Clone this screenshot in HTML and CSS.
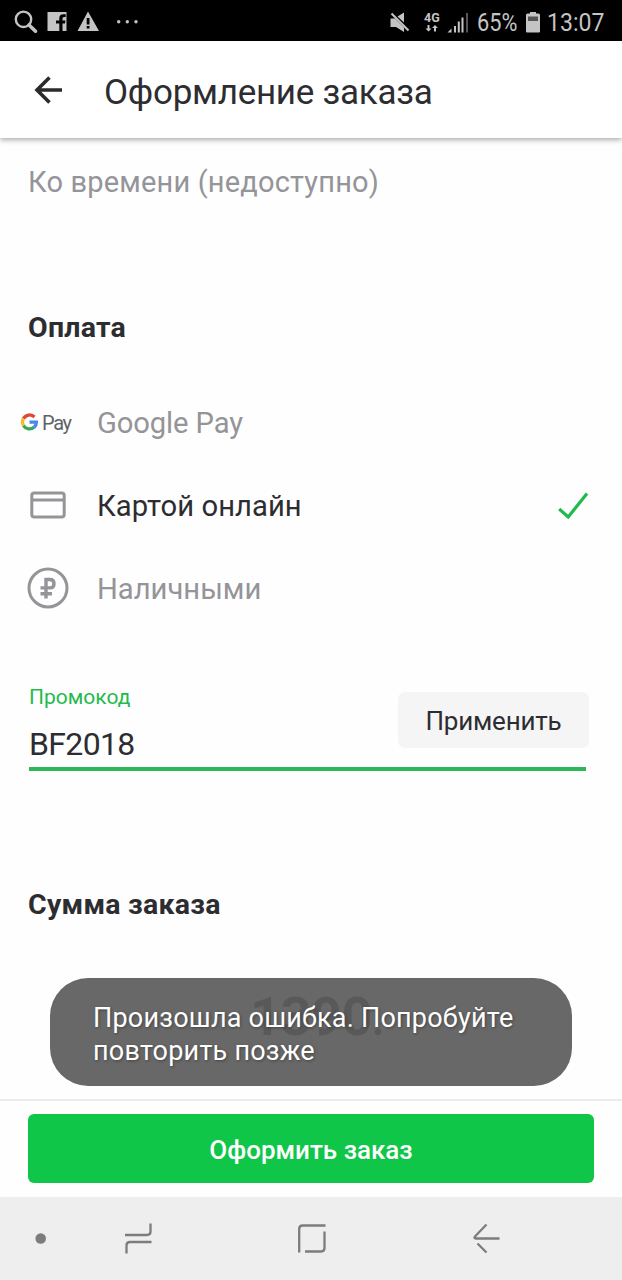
FILE: index.html
```html
<!DOCTYPE html>
<html lang="ru">
<head>
<meta charset="utf-8">
<title>Оформление заказа</title>
<link rel="stylesheet" href="styles.css">
</head>
<body>
<div class="phone">
  <div class="status">
    <svg class="status-left" width="150" height="41" viewBox="0 0 150 41" fill="#c4c4c4">
      <circle cx="23.500" cy="19.300" r="7.700" fill="none" stroke="#c4c4c4" stroke-width="2.400"/>
      <path d="M29 25l6.500 6.200" stroke="#c4c4c4" stroke-width="3.600" stroke-linecap="round"/>
      <path d="M47.500 12h19v19h-4v-7.500h2.500l.4-3H62.500v-2q0-1.500 1.500-1.500h1.700v-2.700h-2.400q-4 0-4 4v2.200H56v3h3.300V31H47.500z"/>
      <path fill-rule="evenodd" d="M88 11.500L99 31H77.500zM86.700 18v6.500h2.800V18zM86.700 26v2.600h2.800V26z"/>
      <circle cx="118.700" cy="21.700" r="1.700"/><circle cx="127.300" cy="21.700" r="1.700"/><circle cx="136" cy="21.700" r="1.700"/>
    </svg>
    <div class="status-right">
      <svg class="mute" width="20" height="21" viewBox="0 0 20 21" fill="#c4c4c4">
        <path d="M.5 6.500H5L14 15.500V20L6 15H.5zM7.500 4.500L14 .5V10.500z"/>
        <path d="M1.500 1.500L18.500 18.500" stroke="#c4c4c4" stroke-width="2.200"/>
      </svg>
      <div class="net"><span>4G</span>
        <svg width="14" height="7" viewBox="0 0 14 7" fill="#c4c4c4"><path d="M2.500 0h2v3.500H6.500L3.500 6.500.5 3.500h2zM9 6.500h2V3h2L10 0 7 3h2z"/></svg>
      </div>
      <svg class="signal" width="22" height="21" viewBox="0 0 22 21" fill="#c4c4c4"><path d="M.5 20.500l4-4v4zM7 14h2v6.500H7zM10.800 9.500h2v11h-2zM14.500 5.500h2v15h-2z"/><path d="M19 1h2v19.500h-2z" fill="#555"/></svg>
      <span class="pct">65%</span>
      <svg class="battery" width="14" height="21" viewBox="0 0 14 21"><path fill="#c4c4c4" d="M4 0h6v1.500h2.500q1.500 0 1.500 1.500v16.500q0 1-1 1H1q-1 0-1-1V3q0-1.500 1.500-1.500H4z"/><path fill="#555" d="M2 4.500h10V9H2z"/></svg>
      <span class="clock">13:07</span>
    </div>
  </div>
  <header class="header">
    <svg width="28" height="28" viewBox="0 0 28 28" fill="none" stroke="#2b2b2e" stroke-width="3.600"><path d="M15.500 1.500L3 14l12.500 12.500M2.500 14H28"/></svg>
    <h1 class="title">Оформление заказа</h1>
  </header>
  <main class="content">
    <p class="slot">Ко времени (недоступно)</p>
    <h2 class="heading">Оплата</h2>
    <ul class="methods">
      <li class="method">
        <svg class="gpay" width="54" height="28" viewBox="0 0 54 28">
          <g fill="none" stroke-width="3.300">
            <path stroke="#e0453a" d="M3.400 9.600A7 7 0 0 1 14.500 8"/>
            <path stroke="#f6bb2d" d="M3.500 16.600A7 7 0 0 1 3.400 9.600"/>
            <path stroke="#3aa757" d="M14 18.300A7 7 0 0 1 3.500 16.600"/>
            <path stroke="#4b86ec" d="M9.500 13.200h6.900A7 7 0 0 1 14 18.500"/>
          </g>
          <text class="pay" x="22" y="20.500" textLength="30">Pay</text>
        </svg>
        <span class="name name-gpay">Google Pay</span>
      </li>
      <li class="method selected">
        <svg class="card" width="36" height="28" viewBox="0 0 36 28" fill="none" stroke="#949499" stroke-width="3"><rect x="1.800" y="2" width="32.400" height="24" rx="2.500"/><path d="M2 9h32"/></svg>
        <span class="name name-card">Картой онлайн</span>
        <svg class="check" width="31" height="28" viewBox="0 0 31 28" fill="none" stroke="#1fbb4e" stroke-width="3.200"><path d="M1.200 17l9 8L29 1.500"/></svg>
      </li>
      <li class="method">
        <svg class="cash" width="42" height="42" viewBox="0 0 42 42" fill="none" stroke="#949499"><circle cx="21" cy="21" r="19" stroke-width="3"/><path stroke-width="3.400" d="M19 31.500V12.500h4q4 0 4 4.200t-4 4.200H13.500M13.500 26.700h11.500"/></svg>
        <span class="name name-cash">Наличными</span>
      </li>
    </ul>
    <section class="promo">
      <div class="field"><label class="label">Промокод</label><div class="value">BF2018</div></div>
      <button class="apply"><span>Применить</span></button>
    </section>
    <h2 class="heading sum">Сумма заказа</h2>
    <div class="total">1390<span class="total-dot">.</span></div>
  </main>
  <footer class="footer"><button class="submit"><span>Оформить заказ</span></button></footer>
  <nav class="nav">
    <svg width="622" height="83" viewBox="0 0 622 83" fill="none" stroke="#7c7c7c" stroke-width="2.300">
      <circle cx="40.700" cy="41.500" r="5.300" fill="#7c7c7c" stroke="none"/>
      <path d="M125 38h22q3.500 0 3.500-3.500V26.500M151.500 45H130q-3.500 0-3.500 3.500V56.500"/>
      <path d="M299.200 55.500V32q0-3.500 3.500-3.500H325.500M324.500 34.500V51q0 3.500-3.500 3.500H305"/>
      <path d="M486.500 27.500L475 39.500q-1.500 2 1 2H499.500M477.500 46.500l9 9"/>
    </svg>
  </nav>
  <div class="toast"><span class="t1">Произошла ошибка. Попробуйте</span><br><span class="t2">повторить позже</span></div>
</div>
</body>
</html>
```
FILE: styles.css
```css
* { box-sizing: border-box; margin: 0; padding: 0; }
body { font-family: Roboto, "Liberation Sans", sans-serif; background: #fefefe; color: #2d2d31; }
svg { display: block; flex: none; }
button { border: 0; font-family: inherit; }
span { white-space: nowrap; }
.phone { position: relative; width: 622px; height: 1280px; display: flex; flex-direction: column; overflow: hidden; }
.status { height: 41px; background: #000; display: flex; justify-content: space-between; flex: none; color: #c4c4c4; }
.status-right { display: flex; align-items: center; width: 232px; padding-top: 3px; }
.net { width: 17px; margin-left: 14px; font-size: 12.5px; font-weight: 700; line-height: 12px; letter-spacing: .2px; }
.net svg { margin: 1px 0 0 1px; }
.signal { margin-left: 6px; }
.pct, .clock { font-size: 26.5px; line-height: 36px; transform-origin: left; flex: none; }
.pct { margin-left: 8px; width: 41px; transform: scaleX(.82); }
.battery { margin-left: 8px; }
.clock { margin-left: 7px; transform: scaleX(.87); }
.header { height: 97px; flex: none; display: flex; align-items: center; padding: 2px 0 0 34px; gap: 42px; background: #fff; box-shadow: 0 2px 5px rgba(0,0,0,.32); z-index: 1; }
.header svg { margin-top: -2px; }
.title { font-size: 35px; font-weight: 400; line-height: 50px; white-space: nowrap; letter-spacing: -.27px; padding-top: 5px; }
.content { height: 961px; flex: none; padding: 24px 28px 0; }
.slot { font-size: 29px; line-height: 40px; color: #949499; letter-spacing: .18px; }
.heading { font-size: 28.5px; font-weight: 700; line-height: 40px; margin-top: 106px; letter-spacing: .25px; }
.methods { list-style: none; margin-top: 33px; }
.method { height: 83px; display: flex; align-items: center; font-size: 29.2px; color: #949499; }
.method.selected { color: #2d2d31; }
.name-gpay { letter-spacing: -.12px; margin-left: 1px; }
.name-card { letter-spacing: .06px; }
.gpay { margin: 0 22px 0 -8px; }
.pay { font-size: 20px; fill: #5f6368; }
.card { margin: -2px 31px 0 2px; }
.cash { margin: -2px 28px 0 -1px; }
.check { margin: 0 5px 0 auto; }
.promo { display: flex; margin: 52px 8px 0 1px; height: 89px; border-bottom: 4px solid #2eb65a; justify-content: space-between; }
.label { display: block; font-size: 21px; line-height: 30px; color: #1fbb4e; }
.value { font-size: 32px; line-height: 40px; margin-top: 12px; letter-spacing: -.65px; }
.apply { width: 191px; height: 56px; margin: 10px -3px 0 0; border-radius: 7px; background: #f5f5f5; font-size: 26px; letter-spacing: -.2px; color: #2d2d31; flex: none; padding-top: 2px; }
.sum { margin-top: 114px; }
.total { width: 140px; margin: 62px 0 0 222px; font-size: 54px; line-height: 60px; font-weight: 700; letter-spacing: -.5px; }
.total-dot { font-size: 42px; }
.footer { height: 98px; flex: none; border-top: 2px solid #ececec; padding: 13px 28px 0; }
.submit { width: 566px; height: 69px; border-radius: 6px; background: #0fc648; color: #fff; font-size: 26px; font-weight: 500; display: flex; align-items: center; justify-content: center; padding-top: 3px; }
.nav { height: 83px; flex: none; background: #eee; }
.toast { position: absolute; z-index: 2; left: 50px; top: 978px; width: 522px; height: 108px; border-radius: 38px; background: rgba(92,92,92,.93); color: #fff; padding: 24px 43px; font-size: 27px; line-height: 33px; letter-spacing: .22px; text-shadow: 1px 1px 3px rgba(0,0,0,.35); }
```
